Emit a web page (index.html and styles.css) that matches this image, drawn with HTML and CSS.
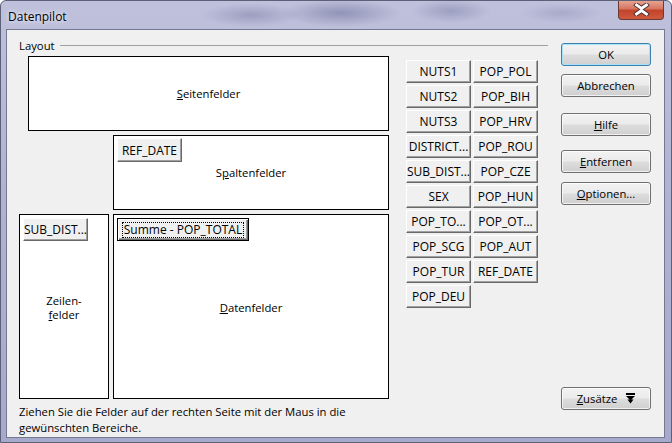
FILE: index.html
```html
<!DOCTYPE html>
<html lang="de">
<head>
    <meta charset="UTF-8">
    <title>Datenpilot</title>
    <link rel="stylesheet" href="styles.css">
</head>
<body>
    <div class="window">
        <div class="titlebar">
            <span class="title">Datenpilot</span>
            <div class="close-btn">
                <svg width="17" height="13" viewBox="0 0 17 13">
                    <path d="M3.5 2 L8.5 5.5 L13.5 2 M3.5 11 L8.5 7.5 L13.5 11" stroke="#4a2a28" stroke-width="4.6" fill="none" stroke-linecap="square"/>
                    <path d="M3.5 2 L8.5 5.5 L13.5 2 M3.5 11 L8.5 7.5 L13.5 11" stroke="#ffffff" stroke-width="2.8" fill="none" stroke-linecap="square"/>
                </svg>
            </div>
        </div>

        <div class="client">
            <div class="main">
                <div class="group-title">
                    <span>Layout</span>
                    <div class="group-line"></div>
                </div>

                <div class="content">
                    <div class="layout-area">
                        <div class="drop-box page-box">
                            <span class="box-label"><u>S</u>eitenfelder</span>
                        </div>
                        <div class="drop-box col-box">
                            <span class="box-label">S<u>p</u>altenfelder</span>
                            <div class="field-btn in-box ref-date">REF_DATE</div>
                        </div>
                        <div class="drop-box row-box">
                            <span class="box-label">Zeilen-<br><u>f</u>elder</span>
                            <div class="field-btn in-box sub-dist">SUB_DIST...</div>
                        </div>
                        <div class="drop-box data-box">
                            <span class="box-label"><u>D</u>atenfelder</span>
                            <div class="field-btn in-box sum-btn"><span class="focus">Summe - POP_TOTAL</span></div>
                        </div>
                    </div>

                    <div class="field-list">
                        <div class="field-btn">NUTS1</div>
                        <div class="field-btn">POP_POL</div>
                        <div class="field-btn">NUTS2</div>
                        <div class="field-btn">POP_BIH</div>
                        <div class="field-btn">NUTS3</div>
                        <div class="field-btn">POP_HRV</div>
                        <div class="field-btn">DISTRICT...</div>
                        <div class="field-btn">POP_ROU</div>
                        <div class="field-btn">SUB_DIST...</div>
                        <div class="field-btn">POP_CZE</div>
                        <div class="field-btn">SEX</div>
                        <div class="field-btn">POP_HUN</div>
                        <div class="field-btn">POP_TO...</div>
                        <div class="field-btn">POP_OT...</div>
                        <div class="field-btn">POP_SCG</div>
                        <div class="field-btn">POP_AUT</div>
                        <div class="field-btn">POP_TUR</div>
                        <div class="field-btn">REF_DATE</div>
                        <div class="field-btn">POP_DEU</div>
                    </div>
                </div>

                <p class="hint">Ziehen Sie die Felder auf der rechten Seite mit der Maus in die<br>gewünschten Bereiche.</p>
            </div>

            <div class="side">
                <div class="btn default"><span>OK</span></div>
                <div class="btn btn-cancel"><span>Abbrechen</span></div>
                <div class="btn btn-help"><span><u>H</u>ilfe</span></div>
                <div class="btn btn-remove"><span><u>E</u>ntfernen</span></div>
                <div class="btn btn-options"><span><u>O</u>ptionen...</span></div>
                <div class="btn btn-more">
                    <span><u>Z</u>usätze</span>
                    <svg class="more-icon" width="9" height="11" viewBox="0 0 9 11">
                        <rect x="0" y="0" width="9" height="2" fill="#000"/>
                        <path d="M0 3 H9 L4.5 7.5 Z" fill="#000"/>
                        <path d="M1.5 6.5 H7.5 L4.5 10.5 Z" fill="#000"/>
                    </svg>
                </div>
            </div>
        </div>
    </div>
</body>
</html>
```

FILE: styles.css
```css
/* Page */
body {
    margin: 0;
    font-family: 'Open Sans', 'Noto Sans', sans-serif;
    font-size: 11.3px;
    color: #000;
}

/* Window frame (glass) */
.window {
    width: 672px;
    height: 443px;
    box-sizing: border-box;
    display: flex;
    flex-direction: column;
    border: 1px solid #5d6178;
    border-radius: 6px 6px 0 0;
    background:
        radial-gradient(ellipse 60px 14px at 340px 12px, rgba(80, 82, 130, 0.4), transparent),
        radial-gradient(ellipse 50px 12px at 250px 14px, rgba(80, 82, 130, 0.3), transparent),
        radial-gradient(ellipse 40px 12px at 450px 10px, rgba(80, 82, 130, 0.3), transparent),
        radial-gradient(ellipse 40px 10px at 560px 12px, rgba(80, 82, 130, 0.2), transparent),
        linear-gradient(180deg, #bfc1dc 0%, #b1b3d2 40%, #a6a9cb 100%);
    overflow: hidden;
}

.titlebar {
    height: 28px;
    display: flex;
    justify-content: space-between;
    align-items: flex-start;
    flex-shrink: 0;
}

.title {
    margin: 7px 0 0 7px;
    font-size: 12px;
    text-shadow: 0 0 6px #e8e9f5, 0 0 3px #eef0f8;
}

.close-btn {
    width: 46px;
    height: 20px;
    margin-right: 7px;
    margin-top: -1px;
    box-sizing: border-box;
    border: 1px solid #6b3a35;
    border-top: none;
    border-radius: 0 0 4px 4px;
    background: linear-gradient(180deg, #e9a897 0%, #d57760 45%, #c4432b 55%, #cd5a3e 100%);
    display: flex;
    align-items: center;
    justify-content: center;
}

/* Client area */
.client {
    flex: 1;
    margin: 0 6px 4px 5px;
    border: 1px solid #747891;
    background: #f0f0f0;
    display: flex;
}

.main {
    width: 541px;
    padding: 7px 0 0 12px;
    box-sizing: border-box;
}

.group-title {
    display: flex;
    align-items: center;
    height: 16px;
    gap: 5px;
}

.group-line {
    flex: 1;
    height: 1px;
    background: #a0a0a0;
    margin-top: 1px;
}

.content {
    display: flex;
    margin-top: 3px;
}

/* Layout drop zones */
.layout-area {
    display: grid;
    grid-template-columns: 90px 276px;
    grid-template-rows: 75px 75px 185px;
    gap: 4px;
}

.drop-box {
    border: 1px solid #000;
    background: #fff;
    box-sizing: border-box;
    display: grid;
    padding: 2px 3px;
}

.drop-box > * {
    grid-area: 1 / 1;
}

.page-box {
    grid-column: 1 / span 2;
    margin-left: 9px;
}

.col-box {
    grid-column: 2;
    grid-row: 2;
}

.row-box {
    grid-column: 1;
    grid-row: 3;
    padding: 3px;
}

.data-box {
    grid-column: 2;
    grid-row: 3;
}

.box-label {
    place-self: center;
    text-align: center;
    line-height: 14px;
    padding-top: 2px;
}

.col-box .box-label,
.page-box .box-label {
    padding-top: 1px;
}

/* Field buttons (classic 3D) */
.field-btn {
    height: 23px;
    box-sizing: border-box;
    background: #f0f0f0;
    border: 1px solid;
    border-color: #fff #696969 #696969 #fff;
    box-shadow: inset -1px -1px #a0a0a0;
    display: flex;
    align-items: center;
    justify-content: center;
    white-space: nowrap;
    overflow: hidden;
    font-size: 12px;
}

.in-box {
    place-self: start;
    padding: 0 3px;
}

.ref-date {
    width: 65px;
    height: 24px;
}

.sub-dist {
    width: 65px;
}

.sum-btn {
    width: 132px;
    margin-top: 1px;
    border: 1px solid #000;
    box-shadow: inset 1px 1px #fff, inset -1px -1px #696969, inset -2px -2px #a0a0a0;
}

.sum-btn .focus {
    border: 1px dotted #000;
    padding: 0 1px;
    line-height: 14px;
}

.field-list {
    margin: 4px 0 0 17px;
    display: grid;
    grid-template-columns: 65px 65px;
    grid-auto-rows: 23px;
    gap: 2px;
    align-content: start;
}

.hint {
    margin: 5px 0 0 0;
    line-height: 16px;
}

/* Push buttons on the right */
.side {
    width: 90px;
    margin-left: 13px;
    padding: 13px 0 27px 0;
    display: flex;
    flex-direction: column;
}

.btn {
    height: 23px;
    box-sizing: border-box;
    border: 1px solid #707070;
    border-radius: 3px;
    background: linear-gradient(180deg, #f2f2f2 0%, #ebebeb 48%, #dddddd 52%, #cfcfcf 100%);
    box-shadow: inset 0 0 0 1px rgba(255, 255, 255, 0.7);
    display: flex;
    align-items: center;
    justify-content: center;
}

.btn.default {
    border-color: #3c7fb1;
    box-shadow: inset 0 0 0 1px #a8e3f8;
}

.more-icon {
    margin-left: 9px;
}

.btn-cancel { margin-top: 8px; }
.btn-help { margin-top: 16px; }
.btn-remove { margin-top: 14px; }
.btn-options { margin-top: 9px; }
.btn-more { margin-top: auto; }
```
